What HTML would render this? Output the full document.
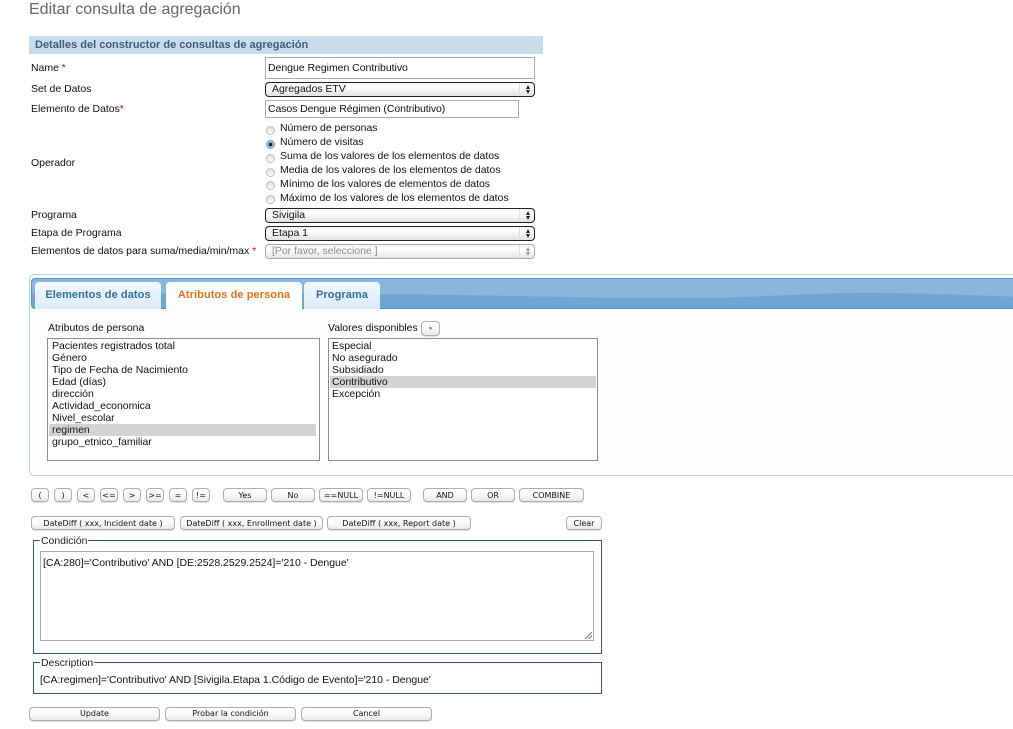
<!DOCTYPE html>
<html lang="es"><head><meta charset="utf-8"><title>Editar consulta de agregación</title>
<style>
html,body{margin:0;padding:0;background:#fff;width:1013px;height:729px;overflow:hidden}
body{position:relative;font:10.5px/14px "Liberation Sans",sans-serif;color:#111;letter-spacing:-.03px;filter:blur(.25px)}
.a,.l,.t,.b,.s,.i,.r,.o{position:absolute;box-sizing:border-box;white-space:nowrap}
.l{left:31px;height:14px}
.r{left:266px;width:9px;height:9px;border-radius:50%;border:1px solid #bbb;background:linear-gradient(#ddd,#fff)}
.r.on{background:radial-gradient(circle,#123 0 1.5px,#8fb4dc 2px,#c4d8ee 5px);border-color:#7f9fc5}
.o{left:280px;height:14px}
.i{left:265px;border:1px solid #aaa;background:#fff;padding-left:2px;color:#111}
.s{left:265px;width:270px;height:15px;border:1.5px solid #222;border-radius:4px;background:linear-gradient(#f4f4f4,#fff 30%,#e2e2e2);padding-left:6px;line-height:12px;color:#111}
.s:after{content:"";position:absolute;right:0;top:0;bottom:0;width:14px;border-left:1px solid #e0e0e0}
.s i{position:absolute;right:4px;z-index:1;width:0;height:0;border-left:2.5px solid transparent;border-right:2.5px solid transparent}
.s i.u{top:2px;border-bottom:4px solid #222}.s i.d{top:7px;border-top:4px solid #222}
.s.dis{border:1px solid #aaa;color:#888;background:linear-gradient(#f4f4f4,#fff 35%,#e4e4e4);line-height:13px}
.s.dis i.u{border-bottom-color:#999}.s.dis i.d{border-top-color:#999}
.t{top:282px;height:27px;border-radius:4px 4px 0 0;background:linear-gradient(#f3f8fc,#dcebf8);color:#2f6ea5;font-weight:bold;font-size:11px;line-height:26px;text-align:center;letter-spacing:.08px}
.t.on{background:#fcfefe;color:#e8701a}
.b{height:14px;border:1px solid #aeaeae;border-radius:4px;background:linear-gradient(#fff,#f8f8f8 55%,#e9e9e9);font:8px/13px "DejaVu Sans",sans-serif;color:#111;text-align:center;box-shadow:0 1px 0 #e2e2e2;letter-spacing:0}
.list{position:absolute;top:338px;height:123px;border:1px solid #8c8c8c;background:#fff;box-sizing:border-box;padding-top:1px;line-height:12px}
.list div{height:12px;padding-left:4px;white-space:nowrap;color:#111}
.list div.sel{background:#d3d3d3;margin:0 3px 0 1px;padding-left:3px}
.list.v div{padding-left:3px}
.list.v div.sel{margin:0 1px 0 1px;padding-left:2px}
.fs{position:absolute;left:33px;width:569px;border:1px solid #2f5587;box-sizing:border-box}
.lg{position:absolute;left:40px;background:#fff;padding:0 1px;height:12px;line-height:12px;color:#222}
.req{color:#d00}
</style></head><body>

<div class="a" style="left:29px;top:0;font-size:16px;line-height:20px;color:#666;letter-spacing:0">Editar consulta de agregación</div>

<div class="a" style="left:29px;top:36px;width:514px;height:18px;background:#c9dcec;color:#3f5a7d;font-weight:bold;font-size:11px;line-height:18px;padding-left:6px;letter-spacing:0">Detalles del constructor de consultas de agregación</div>

<div class="l" style="top:61px">Name <span class="req">*</span></div>
<div class="i" style="top:57px;width:270px;height:22px;line-height:20px">Dengue Regimen Contributivo</div>
<div class="l" style="top:82px">Set de Datos</div>
<div class="s" style="top:82px">Agregados ETV<i class="u"></i><i class="d"></i></div>
<div class="l" style="top:102px">Elemento de Datos<span class="req">*</span></div>
<div class="i" style="top:100px;width:254px;height:18px;line-height:16px;letter-spacing:-.09px">Casos Dengue Régimen (Contributivo)</div>

<div class="l" style="top:156px">Operador</div>
<div class="r" style="top:126px"></div><div class="o" style="top:121px">Número de personas</div>
<div class="r on" style="top:140px"></div><div class="o" style="top:135px">Número de visitas</div>
<div class="r" style="top:154px"></div><div class="o" style="top:149px">Suma de los valores de los elementos de datos</div>
<div class="r" style="top:168px"></div><div class="o" style="top:163px">Media de los valores de los elementos de datos</div>
<div class="r" style="top:181px"></div><div class="o" style="top:177px">Mínimo de los valores de elementos de datos</div>
<div class="r" style="top:195px"></div><div class="o" style="top:191px">Máximo de los valores de los elementos de datos</div>

<div class="l" style="top:208px">Programa</div>
<div class="s" style="top:208px">Sivigila<i class="u"></i><i class="d"></i></div>
<div class="l" style="top:226px">Etapa de Programa</div>
<div class="s" style="top:226px">Etapa 1<i class="u"></i><i class="d"></i></div>
<div class="l" style="top:244px">Elementos de datos para suma/media/min/max <span class="req">*</span></div>
<div class="s dis" style="top:244px">[Por favor, seleccione ]<i class="u"></i><i class="d"></i></div>

<div class="a" style="left:29px;top:274px;width:990px;height:202px;border:1px solid #b9cfdf;border-radius:5px;background:#fcfefe"></div>
<div class="a" style="left:31px;top:278px;width:990px;height:31px;border-radius:4px;overflow:hidden;background:#89b6da">
<svg style="position:absolute;left:-31px;top:0" width="1021" height="31" viewBox="0 0 1021 31"><path d="M31 15L380 16C500 17 580 20 677 20C760 20 800 15 862 15C920 15 970 17 1021 19V31H31Z" fill="#6fa6d1"/></svg>
<div class="a" style="left:0;top:0;right:0;bottom:0;border:1px solid #4a94d6;border-radius:4px"></div>
</div>
<div class="t" style="left:35px;width:126px">Elementos de datos</div>
<div class="t on" style="left:166px;width:136px">Atributos de persona</div>
<div class="t" style="left:304px;width:76px">Programa</div>

<div class="a" style="left:48px;top:321px">Atributos de persona</div>
<div class="a" style="left:328px;top:321px">Valores disponibles</div>
<div class="b" style="left:421px;top:321px;width:19px;height:15px;font-size:6px">»</div>

<div class="list" style="left:47px;width:273px">
<div>Pacientes registrados total</div><div>Género</div><div>Tipo de Fecha de Nacimiento</div><div>Edad (días)</div><div>dirección</div><div>Actividad_economica</div><div>Nivel_escolar</div><div class="sel">regimen</div><div>grupo_etnico_familiar</div>
</div>
<div class="list v" style="left:328px;width:270px">
<div>Especial</div><div>No asegurado</div><div>Subsidiado</div><div class="sel">Contributivo</div><div>Excepción</div>
</div>

<div class="b" style="left:31px;top:488px;width:18px">(</div>
<div class="b" style="left:54px;top:488px;width:18px">)</div>
<div class="b" style="left:77px;top:488px;width:18px">&lt;</div>
<div class="b" style="left:100px;top:488px;width:18px">&lt;=</div>
<div class="b" style="left:123px;top:488px;width:18px">&gt;</div>
<div class="b" style="left:146px;top:488px;width:18px">&gt;=</div>
<div class="b" style="left:169px;top:488px;width:18px">=</div>
<div class="b" style="left:192px;top:488px;width:18px">!=</div>
<div class="b" style="left:223px;top:488px;width:44px">Yes</div>
<div class="b" style="left:271px;top:488px;width:44px">No</div>
<div class="b" style="left:319px;top:488px;width:44px">==NULL</div>
<div class="b" style="left:367px;top:488px;width:44px">!=NULL</div>
<div class="b" style="left:423px;top:488px;width:44px">AND</div>
<div class="b" style="left:471px;top:488px;width:44px">OR</div>
<div class="b" style="left:519px;top:488px;width:65px">COMBINE</div>

<div class="b" style="left:31px;top:516px;width:144px">DateDiff ( xxx, Incident date )</div>
<div class="b" style="left:180px;top:516px;width:143px">DateDiff ( xxx, Enrollment date )</div>
<div class="b" style="left:327px;top:516px;width:144px">DateDiff ( xxx, Report date )</div>
<div class="b" style="left:566px;top:516px;width:36px">Clear</div>

<div class="fs" style="top:540px;height:114px"></div>
<div class="lg" style="top:535px">Condición</div>
<div class="a" style="left:40px;top:551px;width:554px;height:90px;border:1px solid #aaa;background:#fff;padding:4px 2px;color:#111">[CA:280]='Contributivo' AND [DE:2528.2529.2524]='210 - Dengue'
<svg style="position:absolute;right:1px;bottom:1px" width="8" height="8" viewBox="0 0 8 8"><path d="M1 8L8 1M4.5 8L8 4.5" stroke="#777" fill="none"/></svg></div>

<div class="fs" style="top:662px;height:32px"></div>
<div class="lg" style="top:657px">Description</div>
<div class="a" style="left:40px;top:673px;color:#111">[CA:regimen]='Contributivo' AND [Sivigila.Etapa 1.Código de Evento]='210 - Dengue'</div>

<div class="b" style="left:29px;top:707px;width:131px;line-height:12px">Update</div>
<div class="b" style="left:165px;top:707px;width:131px;line-height:12px">Probar la condición</div>
<div class="b" style="left:301px;top:707px;width:131px;line-height:12px">Cancel</div>

</body></html>
